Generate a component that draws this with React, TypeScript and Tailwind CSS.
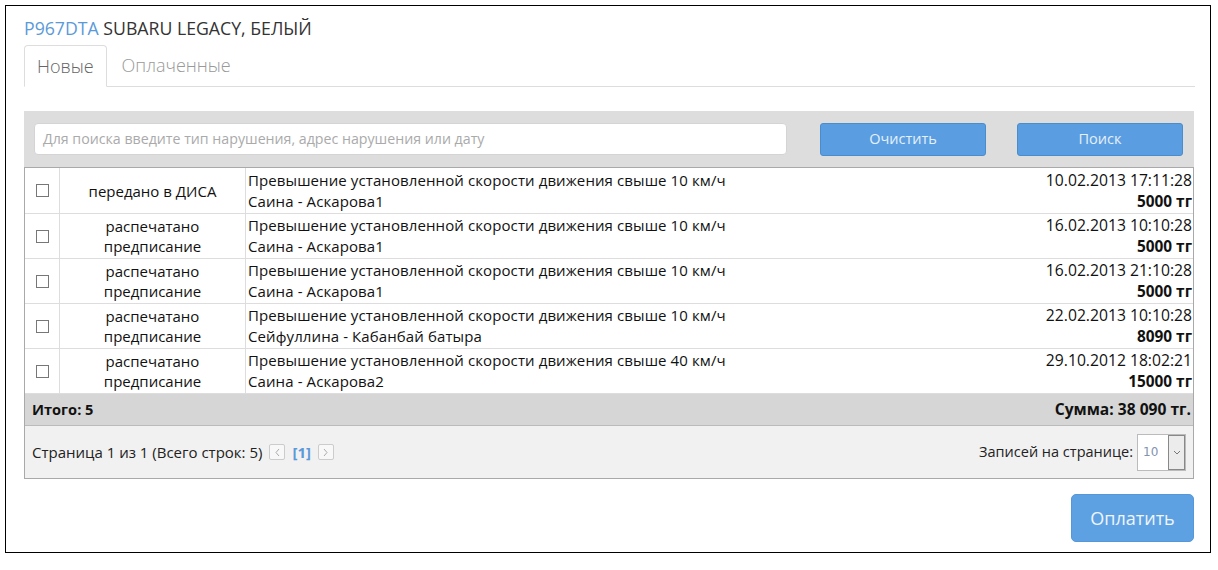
import React from "react";

const rows = [
  { status: "передано в ДИСА", desc: "Превышение установленной скорости движения свыше 10 км/ч", addr: "Саина - Аскарова1", date: "10.02.2013 17:11:28", sum: "5000 тг" },
  { status: "распечатано предписание", desc: "Превышение установленной скорости движения свыше 10 км/ч", addr: "Саина - Аскарова1", date: "16.02.2013 10:10:28", sum: "5000 тг" },
  { status: "распечатано предписание", desc: "Превышение установленной скорости движения свыше 10 км/ч", addr: "Саина - Аскарова1", date: "16.02.2013 21:10:28", sum: "5000 тг" },
  { status: "распечатано предписание", desc: "Превышение установленной скорости движения свыше 10 км/ч", addr: "Сейфуллина - Кабанбай батыра", date: "22.02.2013 10:10:28", sum: "8090 тг" },
  { status: "распечатано предписание", desc: "Превышение установленной скорости движения свыше 40 км/ч", addr: "Саина - Аскарова2", date: "29.10.2012 18:02:21", sum: "15000 тг" },
];

export default function App() {
  return (
    <div className="w-[1218px] h-[570px] bg-white pt-[5px] pl-[5px]" style={{ fontFamily: '"Open Sans", "Liberation Sans", sans-serif' }}>
      <div className="w-[1206px] h-[548px] border border-black pl-[18px] pr-[15px] pt-[10px]">
        <div className="text-[17.7px] leading-[24px] text-[#333]">
          <span className="text-[#5b9ad8]">P967DTA</span> SUBARU LEGACY, БЕЛЫЙ
        </div>
        <div className="mt-[5px] flex border-b border-[#ddd] h-[42px]">
          <div className="h-[42px] px-[12px] border border-[#ddd] border-b-white rounded-t-[4px] bg-white flex items-center text-[18px] font-light text-[#666] -mb-px">
            Новые
          </div>
          <div className="px-[15px] flex items-center text-[18px] font-light text-[#999]">Оплаченные</div>
        </div>
        <div className="mt-[24px] w-[1170px]">
          <div className="h-[56px] bg-[#dddddd] flex items-center pl-[10px] pr-[10px]">
            <div className="w-[753px] h-[32px] bg-white border border-[#d4d4d4] rounded-[4px] flex items-center px-[8px] text-[14.2px] text-[#aaa]">
              Для поиска введите тип нарушения, адрес нарушения или дату
            </div>
            <div className="ml-[33px] w-[166px] h-[33px] bg-[#5a9ee1] border border-[#4a8ccc] rounded-[3px] flex items-center justify-center text-[14.5px] text-[#e6f0fa]">
              Очистить
            </div>
            <div className="ml-[31px] w-[166px] h-[33px] bg-[#5a9ee1] border border-[#4a8ccc] rounded-[3px] flex items-center justify-center text-[14.5px] text-[#e6f0fa]">
              Поиск
            </div>
          </div>
          <div className="border border-[#a9a9a9] text-[15px] text-[#111]">
            {rows.map((r, i) => (
              <div key={i} className={`flex h-[45px] ${i > 0 ? "border-t border-[#ddd]" : ""}`}>
                <div className="w-[35px] border-r border-[#ddd] flex items-center justify-center">
                  <div className="w-[13px] h-[13px] border border-[#777] bg-white" />
                </div>
                <div className="w-[186px] border-r border-[#ddd] flex items-center justify-center text-center leading-[20px] px-[20px]">
                  {r.status}
                </div>
                <div className="flex-1 flex flex-col justify-center pl-[2px] leading-[21px] tracking-[0.1px]">
                  <div>{r.desc}</div>
                  <div>{r.addr}</div>
                </div>
                <div className="flex flex-col justify-center items-end pr-[1px] leading-[21px] text-[15.7px]">
                  <div>{r.date}</div>
                  <div className="font-bold text-[15.4px]">{r.sum}</div>
                </div>
              </div>
            ))}
            <div className="h-[32px] bg-[#d6d6d6] border-t border-[#ddd] flex items-center justify-between px-[7px] pr-[2px] font-bold">
              <span className="text-[14.6px]">Итого: 5</span>
              <span className="text-[15.6px]">Сумма: 38 090 тг.</span>
            </div>
            <div className="h-[53px] bg-[#f1f1f1] border-t border-[#bbb] flex items-center justify-between pl-[7px] pr-[7px]">
              <div className="flex items-center">
                <span className="text-[#222]">Страница 1 из 1 (Всего строк: 5)</span>
                <span className="ml-[7px] w-[16px] h-[16px] border border-[#ccc] rounded-[2px] bg-[#f8f8f8] flex items-center justify-center">
                  <svg width="7" height="9" viewBox="0 0 7 9"><path d="M5 1 L2 4.5 L5 8" stroke="#aaa" strokeWidth="1" fill="none" /></svg>
                </span>
                <span className="ml-[7px] text-[#5b9ad8] font-bold">[1]</span>
                <span className="ml-[7px] w-[16px] h-[16px] border border-[#ccc] rounded-[2px] bg-[#f8f8f8] flex items-center justify-center">
                  <svg width="7" height="9" viewBox="0 0 7 9"><path d="M2 1 L5 4.5 L2 8" stroke="#aaa" strokeWidth="1" fill="none" /></svg>
                </span>
              </div>
              <div className="flex items-center">
                <span className="text-[#222] mr-[4px] text-[14.5px]">Записей на странице:</span>
                <div className="w-[49px] h-[37px] border border-[#bbb] bg-white flex">
                  <div className="flex-1 flex items-center pl-[5px] text-[12px] text-[#8193b0]" style={{ fontFamily: '"DejaVu Sans", sans-serif' }}>10</div>
                  <div className="w-[17px] h-full border border-[#888] bg-[#ececec] flex items-center justify-center">
                    <svg width="8" height="5" viewBox="0 0 8 5"><path d="M1 1 L4 4 L7 1" stroke="#777" strokeWidth="1" fill="none" /></svg>
                  </div>
                </div>
              </div>
            </div>
          </div>
          <div className="flex justify-end mt-[15px]">
            <div className="w-[123px] h-[48px] bg-[#5ea1e2] border border-[#5597d8] rounded-[5px] flex items-center justify-center text-[18px] text-[#eef5fc]">
              Оплатить
            </div>
          </div>
        </div>
      </div>
    </div>
  );
}
